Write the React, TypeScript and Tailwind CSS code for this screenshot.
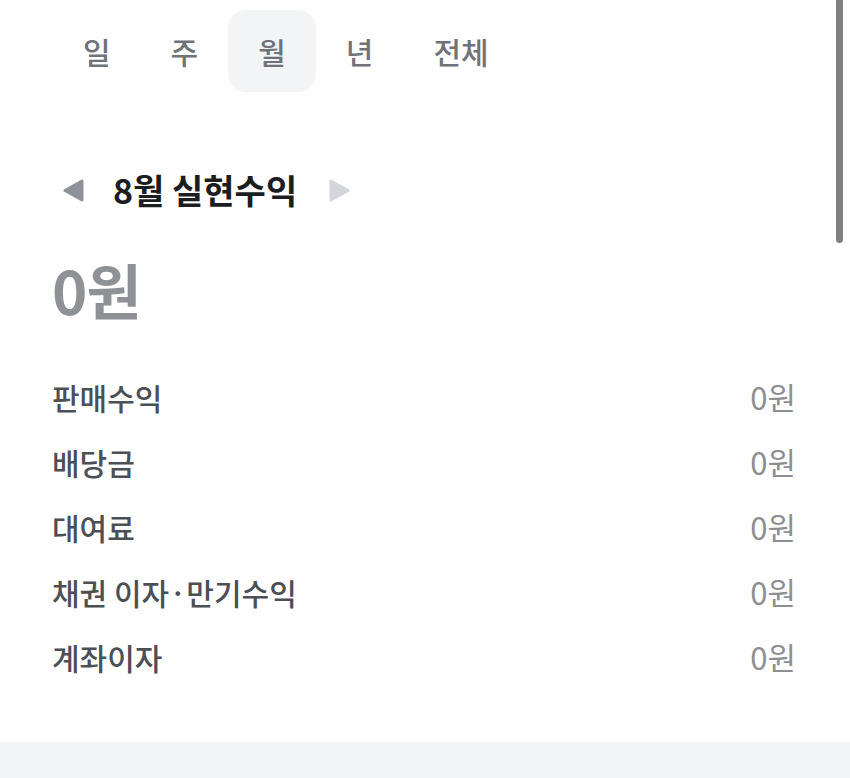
import { useState } from "react";

const tabs = ["일", "주", "월", "년", "전체"];

const rows = [
  { label: "판매수익", value: "0원" },
  { label: "배당금", value: "0원" },
  { label: "대여료", value: "0원" },
  { label: "채권 이자·만기수익", value: "0원" },
  { label: "계좌이자", value: "0원" },
];

function Triangle({ dir, color }: { dir: "left" | "right"; color: string }) {
  const points = dir === "left" ? "20,2 20,21 3,11.5" : "2,2 2,21 19,11.5";
  return (
    <svg width="22" height="23" viewBox="0 0 22 23">
      <polygon
        points={points}
        fill={color}
        stroke={color}
        strokeWidth="3"
        strokeLinejoin="round"
      />
    </svg>
  );
}

export default function App() {
  const [active, setActive] = useState(2);

  return (
    <div className="relative w-[850px] h-[778px] overflow-hidden bg-white font-['Noto_Sans_CJK_KR','Noto_Sans',sans-serif]">
      {/* Period tabs */}
      <nav className="flex pl-[53px] pt-[10px]">
        {tabs.map((t, i) => (
          <button
            key={t}
            onClick={() => setActive(i)}
            className={`h-[82px] px-[30px] rounded-[18px] text-[30px] font-medium text-[#6f7379] ${
              i === active ? "bg-[#f2f4f6]" : ""
            }`}
          >
            {t}
          </button>
        ))}
      </nav>

      {/* Month selector */}
      <div className="flex items-center h-[40px] mt-[78px] pl-[62px]">
        <Triangle dir="left" color="#8e9299" />
        <h2 className="ml-[29px] text-[34px] font-semibold text-[#1b1d21] leading-none">
          8월 실현수익
        </h2>
        <span className="ml-[32px]">
          <Triangle dir="right" color="#d3d6db" />
        </span>
      </div>

      {/* Total */}
      <p className="mt-[49px] pl-[52px] h-[60px] leading-[60px] text-[60px] font-semibold text-[#8e9196] tracking-[-1px]">
        0원
      </p>

      {/* Breakdown */}
      <ul className="mt-[46px] pr-[54px] pl-[52px]">
        {rows.map((r) => (
          <li key={r.label} className="flex items-center justify-between h-[65px]">
            <span className="text-[30px] font-medium text-[#4b4f56]">{r.label}</span>
            <span className="text-[31px] font-normal text-[#8c8f94]">{r.value}</span>
          </li>
        ))}
      </ul>

      {/* Bottom band */}
      <div className="absolute left-0 right-0 bottom-0 h-[36px] bg-[#f2f4f6]" />

      {/* Scrollbar */}
      <div className="absolute right-[7px] top-0 w-[7px] h-[243px] rounded-b-full bg-[#808080]" />
    </div>
  );
}
